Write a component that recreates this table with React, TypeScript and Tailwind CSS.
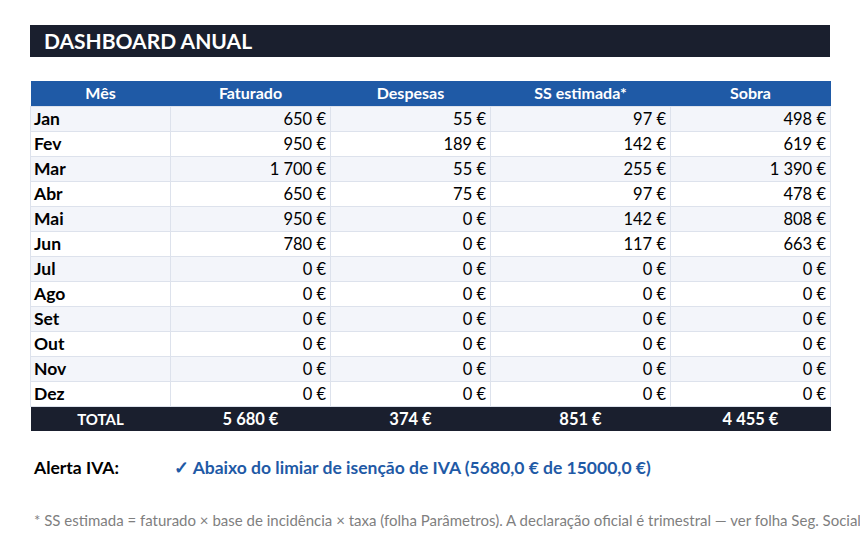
const rows: [string, string, string, string, string][] = [
  ["Jan", "650 €", "55 €", "97 €", "498 €"],
  ["Fev", "950 €", "189 €", "142 €", "619 €"],
  ["Mar", "1 700 €", "55 €", "255 €", "1 390 €"],
  ["Abr", "650 €", "75 €", "97 €", "478 €"],
  ["Mai", "950 €", "0 €", "142 €", "808 €"],
  ["Jun", "780 €", "0 €", "117 €", "663 €"],
  ["Jul", "0 €", "0 €", "0 €", "0 €"],
  ["Ago", "0 €", "0 €", "0 €", "0 €"],
  ["Set", "0 €", "0 €", "0 €", "0 €"],
  ["Out", "0 €", "0 €", "0 €", "0 €"],
  ["Nov", "0 €", "0 €", "0 €", "0 €"],
  ["Dez", "0 €", "0 €", "0 €", "0 €"],
];

const headers = ["Mês", "Faturado", "Despesas", "SS estimada*", "Sobra"];
const totals = ["TOTAL", "5 680 €", "374 €", "851 €", "4 455 €"];

export default function App() {
  return (
    <div className="h-[556px] w-[860px] overflow-hidden bg-white pt-[25px] font-['Lato',sans-serif] text-black">
      {/* Title bar */}
      <div className="ml-[30px] flex h-[32px] w-[800px] items-center bg-[#1a1f2e] pl-[14px] text-[21px] font-bold text-white">
        DASHBOARD ANUAL
      </div>

      {/* Table */}
      <table className="ml-[30px] mt-[24px] w-[800px] table-fixed border-collapse">
        <colgroup>
          <col className="w-[140px]" />
          <col className="w-[160px]" />
          <col className="w-[160px]" />
          <col className="w-[180px]" />
          <col className="w-[160px]" />
        </colgroup>
        <thead>
          <tr className="h-[25px] bg-[#1f5aa6] text-[16px] leading-[20px] font-bold text-white">
            {headers.map((h) => (
              <th key={h} className="p-0 text-center align-middle font-bold">
                {h}
              </th>
            ))}
          </tr>
        </thead>
        <tbody>
          {rows.map((r, i) => (
            <tr
              key={r[0]}
              className={`h-[25px] text-[16.5px] leading-[20px] ${i % 2 === 0 ? "bg-[#f3f5fa]" : "bg-white"}`}
            >
              <td className="border border-[#dde2ec] py-0 pl-[3px] text-[17.5px] font-bold">{r[0]}</td>
              {r.slice(1).map((v, j) => (
                <td key={j} className="border border-[#dde2ec] py-0 pr-[4px] text-right">
                  {v}
                </td>
              ))}
            </tr>
          ))}
          <tr className="h-[25px] bg-[#1a1f2e] text-[16.5px] leading-[20px] font-bold text-white">
            {totals.map((t, i) => (
              <td key={t} className={`p-0 text-center ${i === 0 ? "text-[15px]" : ""}`}>
                {t}
              </td>
            ))}
          </tr>
        </tbody>
      </table>

      {/* VAT alert */}
      <div className="mt-[26px] flex h-[22px] items-center text-[17.5px] font-bold">
        <span className="w-[174px] pl-[34px]">Alerta IVA:</span>
        <span className="text-[#1f5aa6]">✓ Abaixo do limiar de isenção de IVA (5680,0 € de 15000,0 €)</span>
      </div>

      {/* Footnote */}
      <div className="mt-[30px] whitespace-nowrap pl-[34px] text-[15px] text-[#7f7f7f]">
        * SS estimada = faturado × base de incidência × taxa (folha Parâmetros). A declaração oficial é trimestral — ver folha Seg. Social
      </div>
    </div>
  );
}
